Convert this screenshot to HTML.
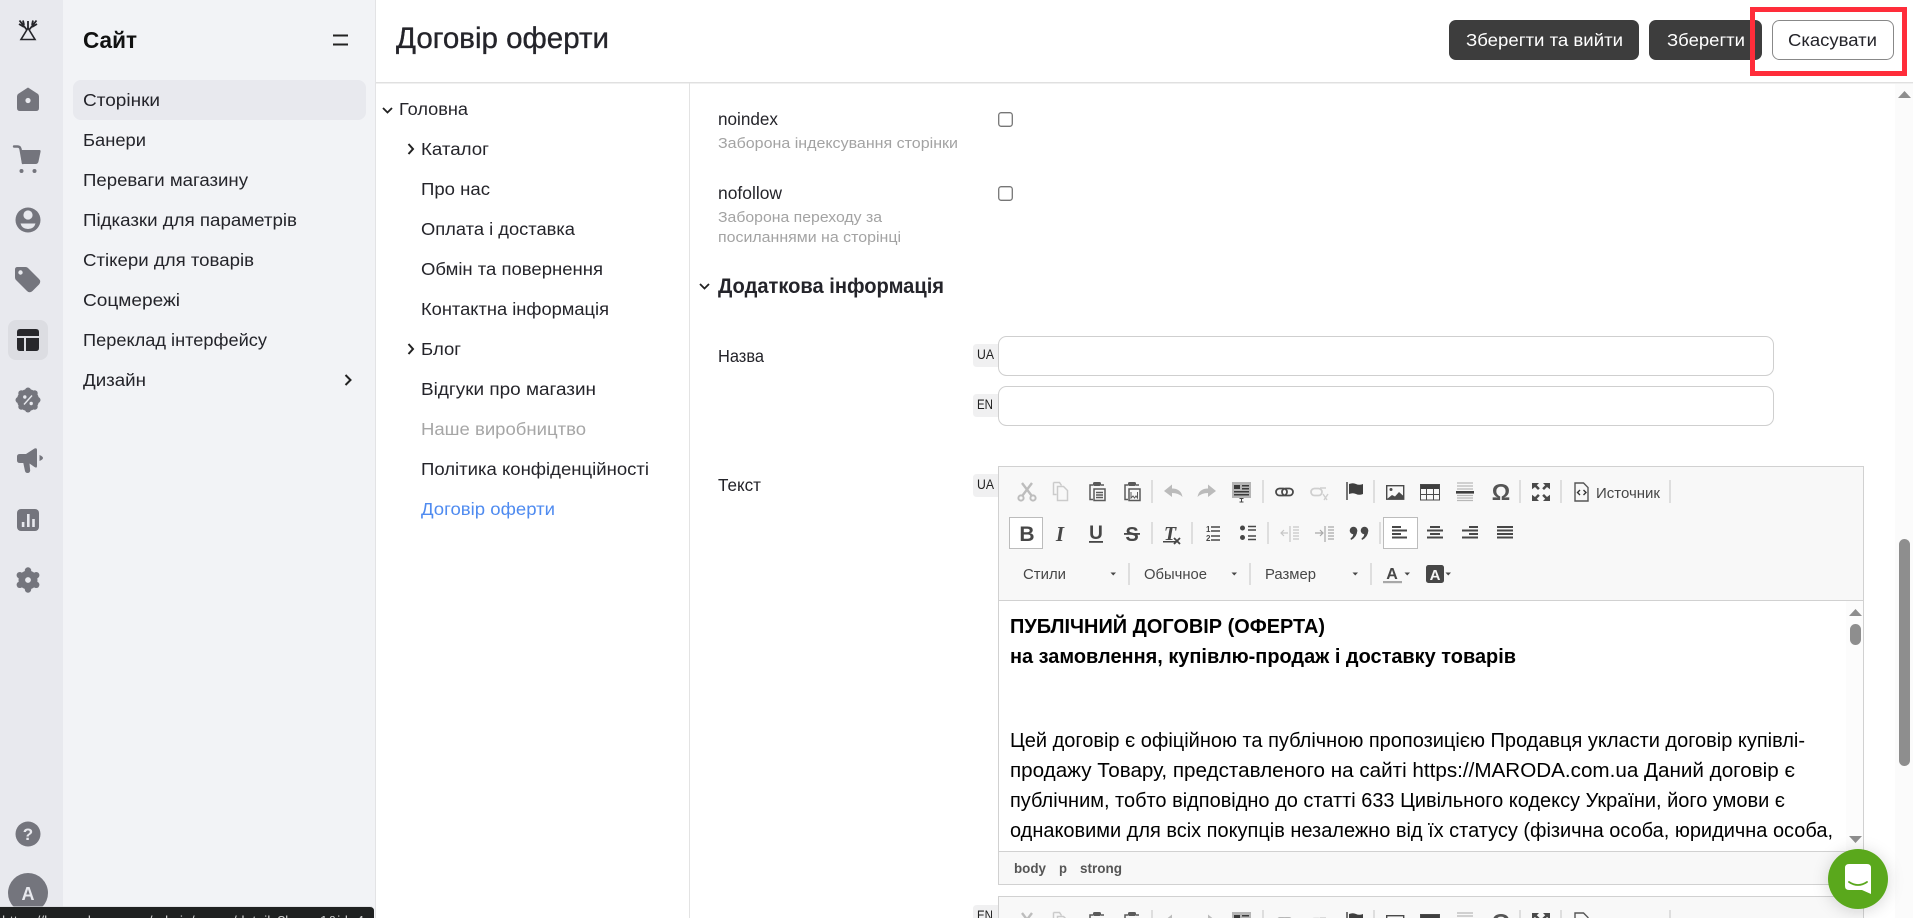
<!DOCTYPE html>
<html lang="uk">
<head>
<meta charset="utf-8">
<title>Договір оферти</title>
<style>
html,body{margin:0;padding:0;width:1913px;height:918px;overflow:hidden;background:#fff}
svg{display:block}
text{font-family:"Liberation Sans",sans-serif;fill:#24242a;font-size:17.2px}
.b{font-weight:700}
.sub{font-size:15px;fill:#a3a3a3}
.ed{font-size:20px;fill:#000}
.tb{font-size:15px;fill:#474747}
.lg{font-size:13.5px;fill:#222}
</style>
</head>
<body>
<svg width="1913" height="918" viewBox="0 0 1913 918" xmlns="http://www.w3.org/2000/svg">
<defs>
<filter id="sh" x="-50%" y="-50%" width="200%" height="200%"><feDropShadow dx="0" dy="2" stdDeviation="8" flood-color="#000" flood-opacity=".16"/></filter>
<g id="r1">
 <!-- cut -->
 <g fill="none" stroke="#bdbdbd" stroke-width="2.400"><circle cx="1021" cy="498" r="2.600" stroke-width="2"/><circle cx="1033" cy="498" r="2.600" stroke-width="2"/><path d="M1022.500 495.500 L1032 483M1031.500 495.500 L1022 483"/></g>
 <!-- copy -->
 <path d="M1053.500 482.500h6l2 3M1053.500 482.500v12h3M1057.500 486.500h6l4 4v10h-10z" fill="none" stroke="#cbcbcb" stroke-width="1.500"/>
 <!-- paste -->
 <g fill="none" stroke="#5a5a5a" stroke-width="1.500"><path d="M1093 485h-3v14.500h3"/><path d="M1101 485h3"/><rect x="1094" y="489" width="11" height="11.500"/><path d="M1096 492.500h7M1096 495h7M1096 497.500h7"/></g><rect x="1093" y="482" width="8" height="4" rx="1.500" fill="#5a5a5a"/>
 <!-- paste word -->
 <g fill="none" stroke="#5a5a5a" stroke-width="1.500"><path d="M1128 485h-3v14.500h3"/><path d="M1136 485h3"/><rect x="1129" y="489" width="11" height="11.500"/><path d="M1131 492v6l2-2 1.500 2 1.500-2 1.500 2v-6" stroke-width="1"/></g><rect x="1128" y="482" width="8" height="4" rx="1.500" fill="#5a5a5a"/>
 <path d="M1152 480v23M1263 480v23M1374 480v23M1520 480v23M1561 480v23M1670 480v23" stroke="#c4c4c4"/>
 <!-- undo redo -->
 <path d="M1164 491l8-6.500v4q9 0 10.500 8.500q-4-4-10.500-4v4z" fill="#bbb"/>
 <path d="M1216 491l-8-6.500v4q-9 0-10.500 8.500q4-4 10.500-4v4z" fill="#bbb"/>
 <!-- templates -->
 <rect x="1232" y="482" width="19" height="16" fill="#b5b5b5"/>
 <path d="M1234 485h6v4h-6zM1242 485h7v1.500h-7zM1242 488h7v1.500h-7zM1234 491h15v1.500h-15zM1234 494h15v1.500h-15z" fill="#3a3a3a"/>
 <path d="M1239.500 498.500h4M1241.500 498.500v3.500M1239.500 502h4" stroke="#444" stroke-width="1" fill="none"/>
 <!-- link / unlink -->
 <g fill="none" stroke="#4a4a4a" stroke-width="1.800"><rect x="1276" y="488.500" width="11" height="7" rx="3.500"/><rect x="1282" y="488.500" width="11" height="7" rx="3.500"/></g>
 <g fill="none" stroke="#cfcfcf" stroke-width="1.800"><rect x="1311" y="488.500" width="11" height="7" rx="3.500"/><path d="M1320 488h6M1323 494l4 6M1328 494l-4 6" stroke-width="1.400"/></g>
 <!-- anchor -->
 <path d="M1347 482v18" stroke="#4a4a4a" stroke-width="1.500"/><path d="M1349 484q4-1.500 7 0t7 0v10q-4 1.500-7 0t-7 0z" fill="#3f3f3f"/>
 <!-- image -->
 <rect x="1386.700" y="485.700" width="17" height="13.500" fill="none" stroke="#4a4a4a" stroke-width="1.400"/><circle cx="1391" cy="489.500" r="1.500" fill="#4a4a4a"/><path d="M1387 499l5-4 3 1.500 4-4.500 4.500 4v3z" fill="#4a4a4a"/>
 <!-- table -->
 <rect x="1420" y="484" width="20" height="5" fill="#3f3f3f"/><g fill="none" stroke="#4a4a4a"><rect x="1420.500" y="484.500" width="19" height="15.500"/><path d="M1426.500 489v11M1433.500 489v11M1420 494.500h20"/></g>
 <!-- hr -->
 <path d="M1457 483h16M1457 486h16M1457 489h16M1457 495.500h16M1457 498h16M1457 500.500h16" stroke="#b8b8b8" stroke-width="1.300"/><rect x="1456" y="491" width="18" height="2.600" fill="#3f3f3f"/>
 <text x="1501" y="500" text-anchor="middle" style="font-size:23px;fill:#555;font-weight:700">Ω</text>
 <!-- maximize -->
 <path d="M1532 483h7l-2.200 2.200 3 3-1.800 1.800-3-3-3 2.200zM1550 483h-7l2.200 2.200-3 3 1.800 1.800 3-3 3 2.200zM1532 501h7l-2.200-2.200 3-3-1.800-1.800-3 3-3-2.200zM1550 501h-7l2.200-2.200-3-3 1.800-1.800 3 3 3-2.200z" fill="#4a4a4a"/>
 <!-- source -->
 <path d="M1575 483h8.500l4.500 4.500v13.500h-13z" fill="none" stroke="#555" stroke-width="1.400"/><path d="M1580 490l-2.500 2.500 2.500 2.500M1583.500 490l2.500 2.500-2.500 2.500" fill="none" stroke="#333" stroke-width="1.400"/>
 <text x="1596" y="498" textLength="64" lengthAdjust="spacingAndGlyphs" class="tb">Источник</text>
</g>
</defs>

<!-- rail -->
<rect x="0" y="0" width="63" height="918" fill="#e8e9ee"/>
<!-- panel -->
<rect x="63" y="0" width="312" height="918" fill="#f2f3f6"/>
<rect x="375" y="0" width="1" height="918" fill="#e3e3e5"/>

<!-- logo -->
<g fill="none" stroke="#25252a" stroke-width="1.600">
 <path d="M28 28L21 39.500H35Z"/>
 <path d="M19.500 20.500L27 30M36.500 20.500L29 30M28 21V28M23 20.500L24 25M33 20.500L32 25M19 24L24 27M37 24L32 27" stroke-width="1.800"/>
</g>
<!-- home -->
<path d="M28 87.500L38 94Q39 95 39 96.500V108Q39 111 36 111H20Q17 111 17 108V96.500Q17 95 18 94Z" fill="#74757d"/><circle cx="28" cy="100.500" r="2.600" fill="#e8e9ee"/>
<!-- cart -->
<path d="M14 146.500h3.500q2.500 0 3 2.500l2.500 14" fill="none" stroke="#74757d" stroke-width="2.400" stroke-linecap="round"/>
<path d="M20 150H39.500Q41 150 40.500 152L38.500 161.500Q38 164 35.500 164H22Z" fill="#74757d"/>
<circle cx="21.500" cy="171" r="2" fill="#74757d"/><circle cx="34.500" cy="171" r="2" fill="#74757d"/>
<!-- user -->
<circle cx="28" cy="220" r="12.500" fill="#74757d"/><circle cx="28" cy="215" r="4.600" fill="#e8e9ee"/><path d="M20.500 223.500H35.500Q34 229 28 229Q22 229 20.500 223.500Z" fill="#e8e9ee"/>
<!-- tag -->
<path d="M17.500 267H25.500Q27 267 28 268L39 279Q41.500 281.500 39 284.500L32.500 291Q29.500 293.500 27 291L16 280Q15 279 15 277.500V269.500Q15 267 17.500 267Z" fill="#74757d"/><circle cx="20.500" cy="272.500" r="2.200" fill="#e8e9ee"/>
<!-- layout active -->
<rect x="8" y="320" width="40" height="40" rx="8" fill="#dcdde2"/>
<path d="M20 329H36Q39 329 39 332V336H17V332Q17 329 20 329ZM17 338H24V351H20Q17 351 17 348ZM26 338H39V348Q39 351 36 351H26Z" fill="#27272b"/>
<!-- percent -->
<g fill="#74757d"><circle cx="28" cy="400" r="11"/><circle cx="28" cy="390.500" r="3"/><circle cx="28" cy="409.500" r="3"/><circle cx="18.500" cy="400" r="3"/><circle cx="37.500" cy="400" r="3"/><circle cx="21.300" cy="393.300" r="3"/><circle cx="34.700" cy="393.300" r="3"/><circle cx="21.300" cy="406.700" r="3"/><circle cx="34.700" cy="406.700" r="3"/></g>
<circle cx="24.800" cy="397" r="1.700" fill="#e8e9ee"/><circle cx="31.200" cy="403.500" r="1.700" fill="#e8e9ee"/><path d="M32 395.500L24 404.500" stroke="#e8e9ee" stroke-width="1.400"/>
<!-- megaphone -->
<path d="M17 456.500Q17 454 20 454H26L34.500 448.500Q37 447.500 37 450V466Q37 468.500 34.500 467L29.500 463.500L30.200 470.500Q30 473 27.500 473Q25.500 473 25 471L23.300 463H20Q17 463 17 460.500Z" fill="#74757d"/><path d="M39.500 455Q43 456.500 43 458Q43 459.500 39.500 461Z" fill="#74757d"/>
<!-- chart -->
<rect x="17" y="509" width="22" height="22" rx="4" fill="#74757d"/><rect x="21.800" y="522" width="2.600" height="5" fill="#e8e9ee"/><rect x="27" y="514" width="2.600" height="13" fill="#e8e9ee"/><rect x="32.200" y="519" width="2.600" height="8" fill="#e8e9ee"/>
<!-- gear -->
<g fill="#74757d"><circle cx="28" cy="580" r="9.500"/><circle cx="28" cy="570.500" r="3.200"/><circle cx="28" cy="589.500" r="3.200"/><circle cx="19.800" cy="575.200" r="3.200"/><circle cx="36.200" cy="575.200" r="3.200"/><circle cx="19.800" cy="584.800" r="3.200"/><circle cx="36.200" cy="584.800" r="3.200"/></g><circle cx="28" cy="580" r="2.900" fill="#e8e9ee"/>
<!-- help -->
<circle cx="28" cy="834" r="12.500" fill="#74757d"/><text x="28" y="840" text-anchor="middle" class="b" style="font-size:17px;fill:#e8e9ee">?</text>
<!-- avatar -->
<circle cx="28" cy="893" r="20" fill="#74757d"/><text x="28" y="900" text-anchor="middle" class="b" style="font-size:18px;fill:#e8e9ee">A</text>

<!-- sidebar -->
<text x="83" y="48" textLength="54" lengthAdjust="spacingAndGlyphs" class="b" style="font-size:23px;fill:#111">Сайт</text>
<path d="M333 35.500H348M333 44.500H348" stroke="#222" stroke-width="2"/>
<rect x="73" y="80" width="293" height="40" rx="8" fill="#e8e9ee"/>
<text x="83" y="106" textLength="77" lengthAdjust="spacingAndGlyphs">Сторінки</text>
<text x="83" y="146" textLength="63" lengthAdjust="spacingAndGlyphs">Банери</text>
<text x="83" y="186" textLength="165" lengthAdjust="spacingAndGlyphs">Переваги магазину</text>
<text x="83" y="226" textLength="214" lengthAdjust="spacingAndGlyphs">Підказки для параметрів</text>
<text x="83" y="266" textLength="171" lengthAdjust="spacingAndGlyphs">Стікери для товарів</text>
<text x="83" y="306" textLength="97" lengthAdjust="spacingAndGlyphs">Соцмережі</text>
<text x="83" y="346" textLength="184" lengthAdjust="spacingAndGlyphs">Переклад інтерфейсу</text>
<text x="83" y="386" textLength="63" lengthAdjust="spacingAndGlyphs">Дизайн</text>
<path d="M345.500 375L350.500 380L345.500 385" fill="none" stroke="#222" stroke-width="2"/>

<!-- header -->
<rect x="376" y="82" width="1537" height="1.500" fill="#e0e0e0"/>
<text x="396" y="48" textLength="213" lengthAdjust="spacingAndGlyphs" stroke="#24242a" stroke-width=".35" style="font-size:29.500px;fill:#24242a">Договір оферти</text>
<rect x="1449" y="20" width="190" height="40" rx="7" fill="#3d3d3d"/>
<text x="1466" y="46" textLength="157" lengthAdjust="spacingAndGlyphs" style="fill:#fff">Зберегти та вийти</text>
<rect x="1649" y="20" width="113" height="40" rx="7" fill="#3d3d3d"/>
<text x="1667" y="46" textLength="78" lengthAdjust="spacingAndGlyphs" style="fill:#fff">Зберегти</text>
<rect x="1772.500" y="20.500" width="121" height="39" rx="7" fill="#fff" stroke="#888"/>
<text x="1788" y="46" textLength="89" lengthAdjust="spacingAndGlyphs">Скасувати</text>
<rect x="1752.500" y="9.500" width="152" height="64" fill="none" stroke="#ff2d3a" stroke-width="5"/>

<!-- tree -->
<rect x="689" y="83" width="1" height="835" fill="#e3e3e3"/>
<path d="M383 108L387.500 112.500L392 108" fill="none" stroke="#222" stroke-width="1.800"/>
<text x="399" y="115" textLength="69" lengthAdjust="spacingAndGlyphs">Головна</text>
<path d="M408.500 144L413 149L408.500 154" fill="none" stroke="#222" stroke-width="2"/>
<text x="421" y="155" textLength="68" lengthAdjust="spacingAndGlyphs">Каталог</text>
<text x="421" y="195" textLength="69" lengthAdjust="spacingAndGlyphs">Про нас</text>
<text x="421" y="235" textLength="154" lengthAdjust="spacingAndGlyphs">Оплата і доставка</text>
<text x="421" y="275" textLength="182" lengthAdjust="spacingAndGlyphs">Обмін та повернення</text>
<text x="421" y="315" textLength="188" lengthAdjust="spacingAndGlyphs">Контактна інформація</text>
<path d="M408.500 344L413 349L408.500 354" fill="none" stroke="#222" stroke-width="2"/>
<text x="421" y="355" textLength="40" lengthAdjust="spacingAndGlyphs">Блог</text>
<text x="421" y="395" textLength="175" lengthAdjust="spacingAndGlyphs">Відгуки про магазин</text>
<text x="421" y="435" textLength="165" lengthAdjust="spacingAndGlyphs" style="fill:#a6a6a6">Наше виробництво</text>
<text x="421" y="475" textLength="228" lengthAdjust="spacingAndGlyphs">Політика конфіденційності</text>
<text x="421" y="515" textLength="134" lengthAdjust="spacingAndGlyphs" style="fill:#4f8bf0">Договір оферти</text>

<!-- outer scrollbar -->
<rect x="1895" y="84" width="18" height="834" fill="#fbfbfb"/>
<path d="M1904.500 91L1911 98H1898Z" fill="#8e8e8e"/>
<rect x="1899" y="539" width="11" height="227" rx="5.500" fill="#8e8e8e"/>

<!-- form -->
<text x="718" y="125" textLength="60" lengthAdjust="spacingAndGlyphs">noindex</text>
<text x="718" y="148" textLength="240" lengthAdjust="spacingAndGlyphs" class="sub">Заборона індексування сторінки</text>
<rect x="998.700" y="112.700" width="13.600" height="13.600" rx="2.500" fill="#fff" stroke="#767676" stroke-width="1.300"/>
<text x="718" y="199" textLength="64" lengthAdjust="spacingAndGlyphs">nofollow</text>
<text x="718" y="222" textLength="164" lengthAdjust="spacingAndGlyphs" class="sub">Заборона переходу за</text>
<text x="718" y="242" textLength="183" lengthAdjust="spacingAndGlyphs" class="sub">посиланнями на сторінці</text>
<rect x="998.700" y="186.700" width="13.600" height="13.600" rx="2.500" fill="#fff" stroke="#767676" stroke-width="1.300"/>

<path d="M700 284L704.500 288.500L709 284" fill="none" stroke="#222" stroke-width="1.800"/>
<text x="718" y="293" textLength="226" lengthAdjust="spacingAndGlyphs" class="b" style="font-size:21px">Додаткова інформація</text>

<text x="718" y="362" textLength="46" lengthAdjust="spacingAndGlyphs">Назва</text>
<path d="M977 344H998V367H977Q973 367 973 363V348Q973 344 977 344Z" fill="#f0f0f1"/>
<text x="977" y="359" textLength="17" lengthAdjust="spacingAndGlyphs" class="lg">UA</text>
<rect x="998.500" y="336.500" width="775" height="39" rx="8" fill="#fff" stroke="#cfcfcf"/>
<path d="M977 394H998V417H977Q973 417 973 413V398Q973 394 977 394Z" fill="#f0f0f1"/>
<text x="977" y="409" textLength="16" lengthAdjust="spacingAndGlyphs" class="lg">EN</text>
<rect x="998.500" y="386.500" width="775" height="39" rx="8" fill="#fff" stroke="#cfcfcf"/>

<text x="718" y="491" textLength="43" lengthAdjust="spacingAndGlyphs">Текст</text>
<path d="M977 474H998V497H977Q973 497 973 493V478Q973 474 977 474Z" fill="#f0f0f1"/>
<text x="977" y="489" textLength="17" lengthAdjust="spacingAndGlyphs" class="lg">UA</text>

<!-- editor -->
<rect x="998.500" y="466.500" width="865" height="418" fill="#f8f8f8" stroke="#d1d1d1"/>
<rect x="999" y="600" width="864" height="251" fill="#fff"/>
<path d="M999 600.500H1863M999 851.500H1863" stroke="#d1d1d1"/>

<use href="#r1"/>

<!-- row 2 -->
<rect x="1009.500" y="517.500" width="33" height="31" fill="#fff" stroke="#bcbcbc"/>
<text x="1027" y="541" text-anchor="middle" class="b" style="font-size:21px;fill:#474747">B</text>
<text x="1060" y="541" text-anchor="middle" class="b" style="font-size:21px;font-style:italic;fill:#474747;font-family:'Liberation Serif',serif">I</text>
<text x="1096" y="539" text-anchor="middle" class="b" style="font-size:19px;fill:#474747">U</text><rect x="1089" y="541" width="14" height="1.800" fill="#474747"/>
<text x="1132" y="541" text-anchor="middle" class="b" style="font-size:20px;fill:#474747">S</text><rect x="1124" y="533" width="16" height="1.800" fill="#474747"/>
<path d="M1152 522v22M1192 522v22M1268 522v22M1380 522v22" stroke="#c4c4c4"/>
<text x="1170" y="540" text-anchor="middle" class="b" style="font-size:20px;font-style:italic;fill:#474747;font-family:'Liberation Serif',serif">T</text>
<rect x="1163" y="541" width="13" height="1.500" fill="#474747"/><path d="M1174 538l6 6M1180 538l-6 6" stroke="#474747" stroke-width="1.800"/>
<!-- ol -->
<text x="1206" y="532" style="font-size:8px;fill:#474747" class="b">1</text><text x="1206" y="541" style="font-size:8px;fill:#474747" class="b">2</text>
<path d="M1211 527h9M1211 531h9M1211 536h9M1211 540h9" stroke="#474747" stroke-width="1.400"/>
<!-- ul -->
<circle cx="1242.500" cy="528" r="2.500" fill="#474747"/><circle cx="1242.500" cy="537.500" r="2.500" fill="#474747"/>
<path d="M1248 526.500h8M1248 530h8M1248 536h8M1248 539.500h8" stroke="#474747" stroke-width="1.500"/>
<!-- outdent indent -->
<path d="M1290 526v16M1293 527h6M1293 530h6M1293 533h6M1293 536h6M1293 539h6M1281 533h7M1284 530l-3 3 3 3" fill="none" stroke="#c6c6c6" stroke-width="1.200"/>
<path d="M1325 526v16M1328 527h6M1328 530h6M1328 533h6M1328 536h6M1328 539h6M1315 533h7M1320 530l3 3-3 3" fill="none" stroke="#a8a8a8" stroke-width="1.200"/>
<!-- quote -->
<circle cx="1353.500" cy="530.500" r="3.800" fill="#474747"/><path d="M1357.300 530.500Q1357 537 1351 540L1350.500 538.500Q1354 536 1353 533Z" fill="#474747"/>
<circle cx="1364.500" cy="530.500" r="3.800" fill="#474747"/><path d="M1368.300 530.500Q1368 537 1362 540L1361.500 538.500Q1365 536 1364 533Z" fill="#474747"/>
<!-- aligns -->
<rect x="1383.500" y="517.500" width="34" height="31" fill="#fff" stroke="#bcbcbc"/>
<path d="M1392 527h9M1392 530.500h15M1392 534h9M1392 537.500h15" stroke="#474747" stroke-width="2"/>
<path d="M1430 527h10M1427 530.500h16M1430 534h10M1427 537.500h16" stroke="#474747" stroke-width="2"/>
<path d="M1469 527h9M1462 530.500h16M1469 534h9M1462 537.500h16" stroke="#474747" stroke-width="2"/>
<path d="M1497 527h16M1497 530.500h16M1497 534h16M1497 537.500h16" stroke="#474747" stroke-width="2"/>

<!-- row 3 -->
<text x="1023" y="579" textLength="43" lengthAdjust="spacingAndGlyphs" class="tb">Стили</text>
<path d="M1110.500 572.500h5.500l-2.750 3z" fill="#474747"/>
<path d="M1129 563v22M1250 563v22M1371 563v22" stroke="#c4c4c4"/>
<text x="1144" y="579" textLength="63" lengthAdjust="spacingAndGlyphs" class="tb">Обычное</text>
<path d="M1231.500 572.500h5.500l-2.750 3z" fill="#474747"/>
<text x="1265" y="579" textLength="51" lengthAdjust="spacingAndGlyphs" class="tb">Размер</text>
<path d="M1352.500 572.500h5.500l-2.750 3z" fill="#474747"/>
<text x="1392" y="579" text-anchor="middle" class="b" style="font-size:16px;fill:#474747">A</text><rect x="1383" y="581" width="19" height="2.200" fill="#a8a8a8"/>
<path d="M1404.500 572.500h5.500l-2.750 3z" fill="#474747"/>
<rect x="1426" y="565" width="18" height="18" rx="2.500" fill="#474747"/><text x="1435" y="580" text-anchor="middle" class="b" style="font-size:15px;fill:#f8f8f8">A</text>
<path d="M1445.500 572.500h5.500l-2.750 3z" fill="#474747"/>

<!-- editor content -->
<text x="1010" y="633" textLength="315" lengthAdjust="spacingAndGlyphs" class="ed b">ПУБЛІЧНИЙ ДОГОВІР (ОФЕРТА)</text>
<text x="1010" y="663" textLength="506" lengthAdjust="spacingAndGlyphs" class="ed b">на замовлення, купівлю-продаж і доставку товарів</text>
<text x="1010" y="747" textLength="795" lengthAdjust="spacingAndGlyphs" class="ed">Цей договір є офіційною та публічною пропозицією Продавця укласти договір купівлі-</text>
<text x="1010" y="777" textLength="785" lengthAdjust="spacingAndGlyphs" class="ed">продажу Товару, представленого на сайті https://MARODA.com.ua Даний договір є</text>
<text x="1010" y="807" textLength="775" lengthAdjust="spacingAndGlyphs" class="ed">публічним, тобто відповідно до статті 633 Цивільного кодексу України, його умови є</text>
<text x="1010" y="837" textLength="823" lengthAdjust="spacingAndGlyphs" class="ed">однаковими для всіх покупців незалежно від їх статусу (фізична особа, юридична особа,</text>

<!-- editor scrollbar -->
<rect x="1846" y="601" width="17" height="250" fill="#fcfcfc"/>
<path d="M1855.500 609L1862 616H1849Z" fill="#8e8e8e"/>
<rect x="1850" y="624" width="11" height="21" rx="5.500" fill="#8e8e8e"/>
<path d="M1855.500 843L1862 836H1849Z" fill="#8e8e8e"/>

<!-- editor footer -->
<text x="1014" y="873" textLength="32" lengthAdjust="spacingAndGlyphs" class="b" style="font-size:14px;fill:#555">body</text>
<text x="1059" y="873" textLength="8" lengthAdjust="spacingAndGlyphs" class="b" style="font-size:14px;fill:#555">p</text>
<text x="1080" y="873" textLength="42" lengthAdjust="spacingAndGlyphs" class="b" style="font-size:14px;fill:#555">strong</text>

<!-- second editor -->
<rect x="998.500" y="896.500" width="865" height="40" fill="#f8f8f8" stroke="#d1d1d1"/>
<use href="#r1" y="430"/>
<path d="M977 905H998V928H977Q973 928 973 924V909Q973 905 977 905Z" fill="#f0f0f1"/>
<text x="977" y="920" textLength="16" lengthAdjust="spacingAndGlyphs" class="lg">EN</text>

<!-- chat -->
<circle cx="1858" cy="879" r="30" fill="#5aa81e" filter="url(#sh)"/>
<path d="M1849 864H1867Q1871 864 1871 868V894L1862 890H1849Q1845 890 1845 886V868Q1845 864 1849 864Z" fill="#fff"/>
<path d="M1849 882Q1858 888 1867 882" fill="none" stroke="#5aa81e" stroke-width="1.800" stroke-linecap="round"/>

<!-- status bubble -->
<path d="M0 907H370Q374 907 374 911V918H0Z" fill="#1f2121"/>
<rect x="0" y="906" width="372" height="1" fill="#d9dadd" opacity=".6"/>
<text x="2" y="925" textLength="362" lengthAdjust="spacingAndGlyphs" style="font-size:13px;fill:#cfcfcf">https://l.maroda.com.ua/admin/pages/details?lang=1&amp;id=4</text>
</svg>
</body>
</html>
